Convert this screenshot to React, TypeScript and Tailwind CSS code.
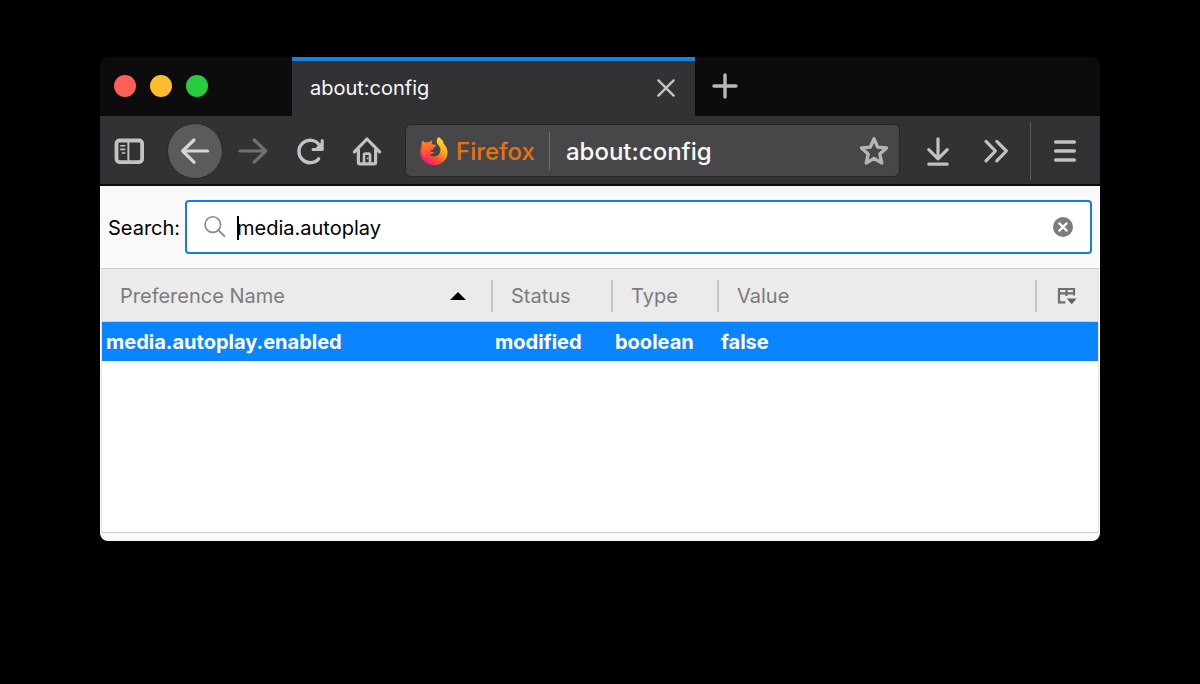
import { useState } from "react";
import type { ReactNode } from "react";

const preferences = [
  { name: "media.autoplay.enabled", status: "modified", type: "boolean", value: "false" },
];

function Icon({ children, width = "3.2" }: { children: ReactNode; width?: string }) {
  return (
    <svg
      className="size-8"
      viewBox="0 0 32 32"
      fill="none"
      stroke="currentColor"
      strokeWidth={width}
      strokeLinecap="round"
      strokeLinejoin="round"
      aria-hidden="true"
    >
      {children}
    </svg>
  );
}

function SidebarIcon() {
  return (
    <Icon>
      <rect x="3.5" y="5.500" width="25.600" height="21.600" rx="3" strokeWidth="3.800" />
      <path d="M15.400 6v21" strokeWidth="2" />
      <path d="M7.800 10.800h4M7.800 14.400h4M9.400 18h2.400" strokeWidth="1.600" />
    </Icon>
  );
}

function BackIcon() {
  return (
    <Icon>
      <path d="M28.600 16H3.600M15 5L3.600 16 15 27.200" />
    </Icon>
  );
}

function ForwardIcon() {
  return (
    <Icon>
      <path d="M3 16h25.400M17.200 5l11.400 11-11.400 11.200" />
    </Icon>
  );
}

function ReloadIcon() {
  return (
    <Icon width="3.400">
      <path d="M24.600 23.800A11.200 11.200 0 1 1 25.400 10.200" />
      <path d="M28.200 5.400v9.200h-9.200" strokeWidth="3" />
      <path d="M28 6.600v7.800h-7.800z" fill="currentColor" stroke="none" />
    </Icon>
  );
}

function HomeIcon() {
  return (
    <Icon>
      <path d="M3.400 16.800L16 4l12.600 12.800" />
      <path d="M7.400 15v12.200a1.600 1.600 0 0 0 1.600 1.600h14a1.600 1.600 0 0 0 1.600-1.600V15" />
      <path d="M13 28v-8a1.400 1.400 0 0 1 1.400-1.400h3.200A1.400 1.400 0 0 1 19 20v8" strokeWidth="2.600" />
      <path d="M16.600 23.400h.2" strokeWidth="1.800" />
    </Icon>
  );
}

function StarIcon() {
  return (
    <Icon width="3.400">
      <path d="M16 3.800l3.700 8.300 8.800.9-6.700 6.100 2 8.900-7.800-4.600-7.800 4.600 2-8.900L3.500 13l8.800-.9z" />
    </Icon>
  );
}

function DownloadIcon() {
  return (
    <Icon>
      <path d="M16 3.800v20M6.800 14.600l9.200 9.200 9.200-9.200M6.800 29.200h18.400" />
    </Icon>
  );
}

function OverflowIcon() {
  return (
    <Icon>
      <path d="M6 6.400L15.400 16 6 25.800M16.800 6.400l9.600 9.600-9.600 9.800" />
    </Icon>
  );
}

function MenuIcon() {
  return (
    <Icon width="3.400">
      <path d="M6.600 7h18.800M6.600 16h18.800M6.600 25h18.800" />
    </Icon>
  );
}

function FirefoxLogo() {
  return (
    <svg className="size-8 shrink-0" viewBox="0 0 32 32" aria-hidden="true">
      <defs>
        <linearGradient id="fx-body" x1="0.85" y1="0.1" x2="0.2" y2="0.95">
          <stop offset="0" stopColor="#ffe226" />
          <stop offset="0.35" stopColor="#ffa21c" />
          <stop offset="0.65" stopColor="#ff4b34" />
          <stop offset="1" stopColor="#f4127e" />
        </linearGradient>
        <linearGradient id="fx-face" x1="0" y1="0" x2="1" y2="1">
          <stop offset="0" stopColor="#ff8b16" />
          <stop offset="1" stopColor="#ff3540" />
        </linearGradient>
      </defs>
      <path
        fill="url(#fx-body)"
        d="M20.2 2c4.4 2.200 5.300 5 5.400 6.500 3 3.100 4.200 6.700 3.900 10.100C28.900 25.300 23.200 30.200 16.200 30.200 8.400 30.200 2.200 24.600 2.200 17c0-2.600.6-4.600 1.500-6.100-.2-2 .1-3.800.7-5.200 1 .5 2 1.300 2.700 2.100 1.500-.6 2.800-.7 4-.4.9-1.100 2-1.800 3.300-2-1 1.300-1 2.800-.6 4.200 1.400.3 2.800.3 4.200.3-.2 1.400-1.500 2.300-3.100 3l.2 2c-1.700-.3-3 .4-3.400 1.700 1.600-.4 2.900.9 4.600.5-1 1.600-2.700 2.300-4.600 2 1.200 2 3.400 2.700 5.700 2.200 3.200-.7 5.100-3.200 5-6.300-.1-2.200-1.100-4-2.900-5.700-1.300-2-1.100-4.800.7-7.300z"
      />
      <path
        fill="url(#fx-face)"
        opacity="0.7"
        d="M4.400 5.700c1 .5 2 1.300 2.700 2.100 1.500-.6 2.800-.7 4-.4.900-1.100 2-1.800 3.300-2-1 1.300-1 2.800-.6 4.200 1.400.3 2.800.3 4.200.3-.2 1.400-1.500 2.300-3.100 3l.2 2c-1.700-.3-3 .4-3.400 1.700-3 .6-5 3.400-4 7-3-3-5-7.600-4-12.700-.2-2 .1-3.800.7-5.200z"
      />
    </svg>
  );
}

function ToolButton({ label, className, children }: { label: string; className: string; children: ReactNode }) {
  return (
    <button type="button" aria-label={label} className={`flex h-14 shrink-0 items-center justify-center ${className}`}>
      {children}
    </button>
  );
}

function TabStrip() {
  return (
    <div className="flex h-[59px] items-stretch bg-[#0c0c0d]">
      <div className="flex w-48 shrink-0 items-center gap-[14px] pb-px pl-[14px]">
        <button type="button" aria-label="Close window" className="size-[22px] rounded-full bg-[#ff5f57]" />
        <button type="button" aria-label="Minimize window" className="size-[22px] rounded-full bg-[#ffbd2e]" />
        <button type="button" aria-label="Zoom window" className="size-[22px] rounded-full bg-[#28cc40]" />
      </div>
      <div className="flex w-[403px] items-center justify-between border-t-4 border-[#1583e0] bg-[#323234] pr-[18px] pb-px pl-[18px]">
        <span className="text-xl text-[#f9f9fa]">about:config</span>
        <button type="button" aria-label="Close tab" className="text-[#c4c4c5]">
          <svg className="size-[22px]" viewBox="0 0 22 22" fill="none" stroke="currentColor" strokeWidth="2.400" strokeLinecap="round" aria-hidden="true">
            <path d="M3.400 3.400l15.200 15.200M18.600 3.400L3.400 18.600" />
          </svg>
        </button>
      </div>
      <button type="button" aria-label="New tab" className="flex w-[60px] items-center justify-center pb-px text-[#b8b8b9]">
        <svg className="size-7" viewBox="0 0 28 28" fill="none" stroke="currentColor" strokeWidth="3.400" strokeLinecap="round" aria-hidden="true">
          <path d="M14 3v22M3 14h22" />
        </svg>
      </button>
    </div>
  );
}

function Toolbar() {
  return (
    <div className="flex h-[70px] items-center border-b-2 border-[#0c0c0d] bg-[#323234] pt-px text-[#c2c2c3]">
      <ToolButton label="Show sidebars" className="w-[58px]">
        <SidebarIcon />
      </ToolButton>
      <ToolButton label="Back" className="ml-2 w-[58px]">
        <span className="flex size-14 items-center justify-center rounded-full border border-[#262628] bg-[#5b5b5d] text-[#d6d6d7]">
          <BackIcon />
        </span>
      </ToolButton>
      <ToolButton label="Forward" className="w-[57px] text-[#707072]">
        <ForwardIcon />
      </ToolButton>
      <ToolButton label="Reload" className="w-[58px]">
        <ReloadIcon />
      </ToolButton>
      <ToolButton label="Home" className="w-14">
        <HomeIcon />
      </ToolButton>
      <div className="ml-[10px] flex h-[53px] min-w-0 flex-1 items-center rounded-md border border-[#262628] bg-[#474749] pr-[9px] pl-3">
        <FirefoxLogo />
        <span className="ml-[6px] pt-0.5 text-2xl font-medium text-[#e8730c]">Firefox</span>
        <span className="ml-[14px] h-[38px] w-px shrink-0 bg-[#6c6c6e]" />
        <input
          type="text"
          aria-label="Address"
          defaultValue="about:config"
          className="ml-4 min-w-0 flex-1 bg-transparent pt-0.5 text-2xl font-medium text-[#f9f9fa] outline-none"
        />
        <button type="button" aria-label="Bookmark this page" className="text-[#b4b4b5]">
          <StarIcon />
        </button>
      </div>
      <ToolButton label="Downloads" className="ml-[9px] w-[58px]">
        <DownloadIcon />
      </ToolButton>
      <ToolButton label="More tools" className="w-[58px]">
        <OverflowIcon />
      </ToolButton>
      <span className="ml-[5px] h-[58px] w-px shrink-0 bg-[#5c5c5e]" />
      <ToolButton label="Open menu" className="mr-[6px] ml-[5px] w-[58px]">
        <MenuIcon />
      </ToolButton>
    </div>
  );
}

function SearchRow({ query, onChange }: { query: string; onChange: (value: string) => void }) {
  return (
    <div className="flex items-center pt-[14px] pr-2 pb-[14px] pl-2">
      <label htmlFor="pref-search" className="w-[77px] shrink-0 pt-0.5 text-xl text-black">
        Search:
      </label>
      <div className="flex h-[54px] min-w-0 flex-1 items-center rounded border-2 border-[#1a7ae4] bg-white pr-4 pl-4">
        <svg className="size-6 shrink-0 text-[#8a8a8a]" viewBox="0 0 24 24" fill="none" stroke="currentColor" strokeWidth="1.600" strokeLinecap="round" aria-hidden="true">
          <circle cx="9.800" cy="9.600" r="7.800" />
          <path d="M15.400 15.200l6 6" strokeWidth="1.900" />
        </svg>
        <div className="relative ml-[10px] min-w-0 flex-1 pt-0.5">
          <span className="absolute top-1 left-0 h-6 w-0.5 bg-black" />
          <input
            id="pref-search"
            type="text"
            value={query}
            onChange={(event) => onChange(event.target.value)}
            className="block w-full bg-transparent text-xl text-black outline-none"
          />
        </div>
        <button type="button" aria-label="Clear search" onClick={() => onChange("")}>
          <svg className="size-[22px]" viewBox="0 0 22 22" aria-hidden="true">
            <circle cx="11" cy="11" r="10" fill="#7c7c7c" />
            <path d="M7.400 7.400l7.200 7.200M14.600 7.400l-7.200 7.200" stroke="#fff" strokeWidth="2.200" strokeLinecap="round" />
          </svg>
        </button>
      </div>
    </div>
  );
}

function PreferenceTable({ query }: { query: string }) {
  const rows = preferences.filter((pref) => pref.name.includes(query));
  const divider = "flex h-8 items-center border-l-2 border-[#c4c4c4] pl-[18px]";

  return (
    <div className="mx-px min-h-[265px] border border-[#cfcfcf] border-x-[#e4e4e4] bg-white">
      <table className="w-full table-fixed border-collapse text-left text-xl">
        <colgroup>
          <col className="w-[389px]" />
          <col className="w-[120px]" />
          <col className="w-[106px]" />
          <col />
          <col className="w-[63px]" />
        </colgroup>
        <thead className="bg-[#ebebeb] text-[#7c7c7c]">
          <tr className="h-[52px] border-b border-[#cfcfcf]">
            <th scope="col" className="p-0 pt-0.5 font-normal" aria-sort="ascending">
              <div className="flex h-8 items-center justify-between pr-[25px] pl-[18px]">
                Preference Name
                <svg className="h-2 w-4" viewBox="0 0 16 8" aria-hidden="true">
                  <path d="M0 8L8 0l8 8z" fill="#000" />
                </svg>
              </div>
            </th>
            <th scope="col" className="p-0 pt-0.5 font-normal">
              <div className={divider}>Status</div>
            </th>
            <th scope="col" className="p-0 pt-0.5 font-normal">
              <div className={divider}>Type</div>
            </th>
            <th scope="col" className="p-0 pt-0.5 font-normal">
              <div className={divider}>Value</div>
            </th>
            <th scope="col" className="p-0 pt-0.5 font-normal">
              <div className="flex h-8 items-center border-l-2 border-[#c4c4c4] pl-5">
                <button type="button" aria-label="Select columns to display">
                  <svg className="size-5" viewBox="0 0 20 20" fill="none" stroke="#707070" strokeWidth="2.200" aria-hidden="true">
                    <path d="M17 9.400V3H2v13.400h6.400M2 7.400h15M9.500 3v7" />
                    <path d="M9.800 12.600h9.800L14.700 18.200z" fill="#606060" stroke="none" />
                  </svg>
                </button>
              </div>
            </th>
          </tr>
        </thead>
        <tbody>
          {rows.map((pref) => (
            <tr key={pref.name} className="h-10 bg-[#0a84ff] font-bold text-white">
              <td className="p-0 pt-0.5 pl-1">{pref.name}</td>
              <td className="p-0 pt-0.5 pl-1">{pref.status}</td>
              <td className="p-0 pt-0.5 pl-1">{pref.type}</td>
              <td className="p-0 pt-0.5 pl-1">{pref.value}</td>
              <td className="p-0" />
            </tr>
          ))}
        </tbody>
      </table>
    </div>
  );
}

export default function App() {
  const [query, setQuery] = useState("media.autoplay");

  return (
    <div className="min-h-screen bg-black px-[100px] pt-[57px] pb-10 font-['Inter','Liberation_Sans',sans-serif]">
      <main className="overflow-hidden rounded-lg">
        <TabStrip />
        <Toolbar />
        <section className="bg-[#f9f9fa] pb-2">
          <SearchRow query={query} onChange={setQuery} />
          <PreferenceTable query={query} />
        </section>
      </main>
    </div>
  );
}
